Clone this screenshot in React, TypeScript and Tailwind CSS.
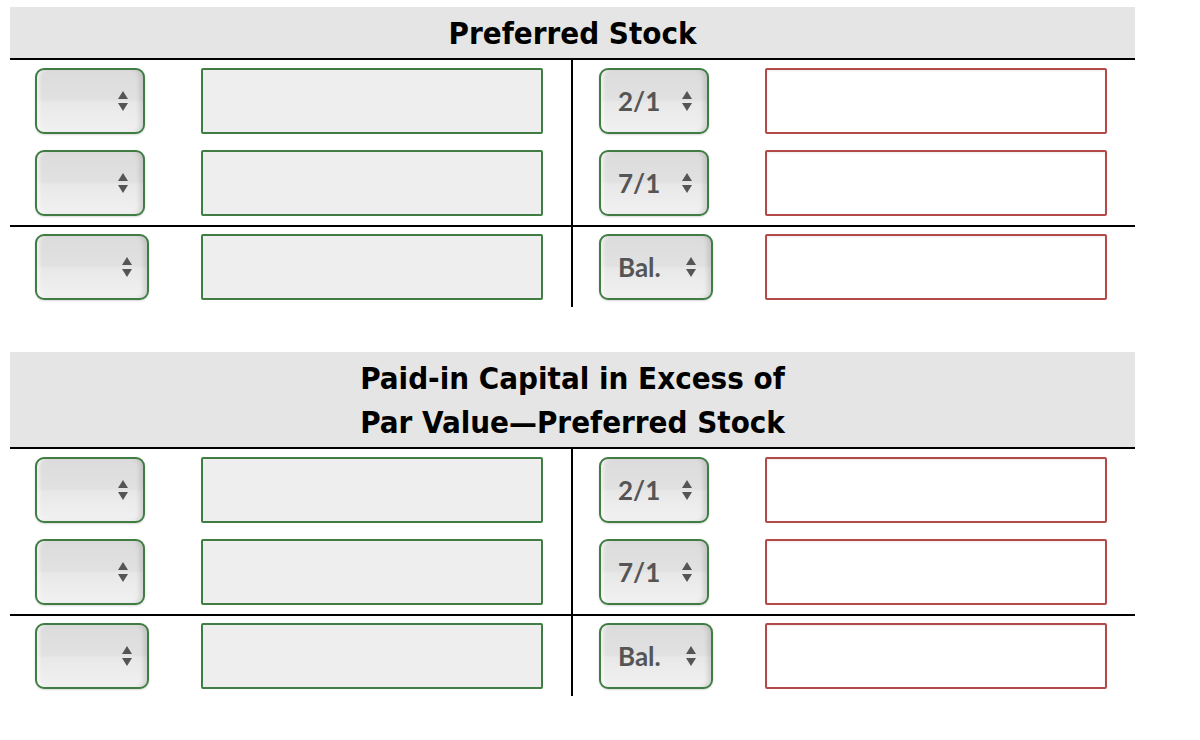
import React from "react";

type Row = { date: string };

const selectBase =
  "flex h-[66px] items-center justify-between rounded-[9px] border-2 border-[#3f7d43] bg-[linear-gradient(180deg,#dcdcdc_0%,#e1e1e1_48%,#e8e8e8_52%,#f1f1f1_100%)] pl-[17px] pr-[14px] text-[26px] font-bold text-[#555] shadow-[inset_-5px_0_5px_-2px_rgba(0,0,0,0.13),inset_4px_0_4px_-2px_rgba(255,255,255,0.7),0_1px_2px_rgba(0,0,0,0.15)]";

function Arrows() {
  return (
    <svg width="12" height="22" viewBox="0 0 12 22" className="shrink-0">
      <polygon points="6,1 11,9 1,9" fill="#555" />
      <polygon points="1,13 11,13 6,21" fill="#555" />
    </svg>
  );
}

function Select({ value, width }: { value?: string; width: string }) {
  return (
    <div className={`${selectBase} ${width}`}>
      <span className="leading-none">{value ?? ""}</span>
      <Arrows />
    </div>
  );
}

function GreenInput() {
  return (
    <div className="h-[66px] w-[342px] rounded-[2px] border-2 border-[#3f7d43] bg-[#eeeeee]" />
  );
}

function RedInput() {
  return (
    <div className="h-[66px] w-[342px] rounded-[2px] border-2 border-[#b34a48] bg-white shadow-[inset_0_1px_2px_rgba(0,0,0,0.08)]" />
  );
}

function Half({ side, date, wide }: { side: "left" | "right"; date?: string; wide?: boolean }) {
  const w = wide ? "w-[114px]" : "w-[110px]";
  if (side === "left") {
    return (
      <div className="grid grid-cols-[166px_342px] pl-[25px]">
        <Select width={w} />
        <GreenInput />
      </div>
    );
  }
  return (
    <div className="grid grid-cols-[166px_342px] pl-[26px]">
      <Select value={date} width={w} />
      <RedInput />
    </div>
  );
}

function Group({ rows, last }: { rows: Row[]; last?: boolean }) {
  const pad = last ? "pt-[7px] pb-[7px]" : "pt-[8px] pb-[9px]";
  return (
    <div className={`flex ${last ? "" : "border-b-2 border-black"}`}>
      <div className={`flex w-[563px] flex-col gap-[16px] border-r-2 border-black ${pad}`}>
        {rows.map((r, i) => (
          <Half key={i} side="left" wide={r.date === "Bal."} />
        ))}
      </div>
      <div className={`flex flex-1 flex-col gap-[16px] ${pad}`}>
        {rows.map((r, i) => (
          <Half key={i} side="right" date={r.date} wide={r.date === "Bal."} />
        ))}
      </div>
    </div>
  );
}

function Account({ title }: { title: React.ReactNode }) {
  return (
    <div className="w-[1125px]">
      <div
        className="border-b-2 border-black bg-[#e5e5e5] pt-[4px] pb-[3px] text-center text-[31px] font-bold leading-[44px] text-black [font-stretch:condensed]"
        style={{ fontFamily: "'DejaVu Sans Condensed', 'DejaVu Sans', sans-serif" }}
      >
        {title}
      </div>
      <Group rows={[{ date: "2/1" }, { date: "7/1" }]} />
      <Group rows={[{ date: "Bal." }]} last />
    </div>
  );
}

export default function App() {
  return (
    <div
      className="min-h-[740px] w-[1200px] bg-white pl-[10px] pt-[7px]"
      style={{ fontFamily: "Lato, 'Open Sans', sans-serif" }}
    >
      <div className="flex flex-col gap-[45px]">
        <Account title="Preferred Stock" />
        <Account
          title={
            <>
              Paid-in Capital in Excess of
              <br />
              Par Value—Preferred Stock
            </>
          }
        />
      </div>
    </div>
  );
}
